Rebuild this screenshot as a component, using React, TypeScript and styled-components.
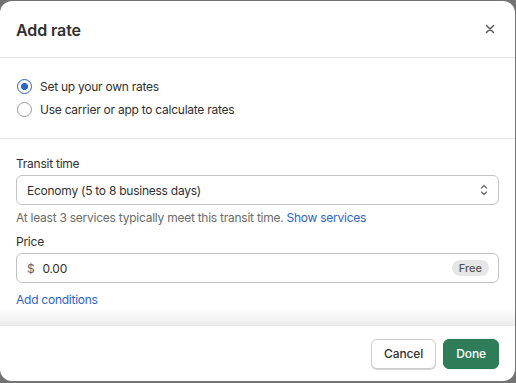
import React from "react";
import styled, { createGlobalStyle } from "styled-components";

const Global = createGlobalStyle`
  html, body { margin: 0; padding: 0; }
  body {
    background: #737373;
    font-family: Inter, "Noto Sans", "Liberation Sans", sans-serif;
    color: #303030;
    -webkit-font-smoothing: antialiased;
  }
  * { box-sizing: border-box; }
`;

const Modal = styled.div`
  margin-top: 1px;
  width: 515px;
  height: 380px;
  background: #fff;
  border-radius: 12px;
  display: flex;
  flex-direction: column;
  overflow: hidden;
  font-size: 12px;
  letter-spacing: -0.25px;
`;

const Header = styled.div`
  height: 57px;
  flex: none;
  display: flex;
  align-items: center;
  justify-content: space-between;
  padding: 0 16px;
  border-bottom: 1px solid #e3e3e3;
`;

const Title = styled.h1`
  margin: 0;
  font-size: 16px;
  font-weight: 600;
  letter-spacing: -0.1px;
  color: #303030;
  padding-top: 1px;
`;

const Close = styled.button`
  border: 0;
  background: none;
  padding: 0;
  width: 20px;
  height: 20px;
  display: flex;
  align-items: center;
  justify-content: center;
  margin-right: -1px;
`;

const Section = styled.div<{ $fade?: boolean }>`
  padding: ${(p) => (p.$fade ? "17px 16px 0" : "20px 16px 21px")};
  display: flex;
  flex-direction: column;
  ${(p) =>
    p.$fade
      ? `flex: 1; background: linear-gradient(to bottom, #fff calc(100% - 18px), #f6f6f6 calc(100% - 8px), #ebebeb);`
      : `border-bottom: 1px solid #e3e3e3; gap: 7px;`}
`;

const RadioRow = styled.label`
  display: flex;
  align-items: center;
  gap: 8px;
  height: 16px;
  color: #303030;
`;

const RadioDot = styled.span<{ $on?: boolean }>`
  width: 15px;
  height: 15px;
  border-radius: 50%;
  flex: none;
  margin-left: 1px;
  border: ${(p) => (p.$on ? "1.5px solid #2c64c8" : "1.3px solid #9a9a9a")};
  background: ${(p) =>
    p.$on ? "radial-gradient(circle, #2c64c8 0 3.3px, #fff 3.8px)" : "#fff"};
`;

const Label = styled.div`
  color: #303030;
  line-height: 16px;
  margin-bottom: 3px;
`;

const Field = styled.div`
  height: 30px;
  border: 1px solid #c4c4c4;
  border-radius: 6px;
  display: flex;
  align-items: center;
  padding: 0 9px 0 10px;
  color: #303030;
`;

const FieldText = styled.span`
  flex: 1;
`;

const Prefix = styled.span`
  color: #616161;
  margin-right: 8px;
`;

const Help = styled.div`
  color: #6b6b6b;
  line-height: 16px;
  margin: 5px 0 8px;
`;

const Link = styled.a`
  color: #2c64c8;
  text-decoration: none;
`;

const Badge = styled.span`
  background: #e6e6e6;
  color: #555;
  font-size: 11px;
  font-weight: 500;
  letter-spacing: 0;
  border-radius: 8px;
  padding: 2px 7px;
  line-height: 12px;
`;

const Conditions = styled.div`
  margin-top: 9px;
  line-height: 16px;
`;

const Footer = styled.div`
  height: 56px;
  flex: none;
  border-top: 1px solid #e8e8e8;
  display: flex;
  align-items: center;
  justify-content: flex-end;
  gap: 7px;
  padding: 0 16px 0 0;
`;

const Button = styled.button<{ $primary?: boolean }>`
  height: 30px;
  border-radius: 6px;
  font-family: inherit;
  font-size: 12px;
  letter-spacing: -0.1px;
  font-weight: 500;
  padding: 0 12px;
  border: ${(p) => (p.$primary ? "1px solid #2a7a55" : "1px solid #cccccc")};
  background: ${(p) => (p.$primary ? "#2e7d58" : "#fff")};
  color: ${(p) => (p.$primary ? "#fff" : "#303030")};
  box-shadow: ${(p) => (p.$primary ? "none" : "0 1px 0 #d6d6d6")};
`;

export default function App() {
  return (
    <>
      <Global />
      <Modal>
        <Header>
          <Title>Add rate</Title>
          <Close aria-label="Close">
            <svg width="10" height="10" viewBox="0 0 10 10">
              <path d="M1.5 1.5 L8.5 8.5 M8.5 1.5 L1.5 8.5" stroke="#5a5a5a" strokeWidth="1.5" strokeLinecap="round" />
            </svg>
          </Close>
        </Header>
        <Section>
          <RadioRow>
            <RadioDot $on />
            Set up your own rates
          </RadioRow>
          <RadioRow>
            <RadioDot />
            Use carrier or app to calculate rates
          </RadioRow>
        </Section>
        <Section $fade>
          <Label>Transit time</Label>
          <Field>
            <FieldText>Economy (5 to 8 business days)</FieldText>
            <svg width="10" height="14" viewBox="0 0 10 14">
              <path d="M2.5 5 L5 2.5 L7.5 5 M2.5 9 L5 11.5 L7.5 9" fill="none" stroke="#666" strokeWidth="1.2" strokeLinecap="round" strokeLinejoin="round" />
            </svg>
          </Field>
          <Help>
            At least 3 services typically meet this transit time. <Link href="#">Show services</Link>
          </Help>
          <Label>Price</Label>
          <Field>
            <Prefix>$</Prefix>
            <FieldText>0.00</FieldText>
            <Badge>Free</Badge>
          </Field>
          <Conditions>
            <Link href="#">Add conditions</Link>
          </Conditions>
        </Section>
        <Footer>
          <Button>Cancel</Button>
          <Button $primary>Done</Button>
        </Footer>
      </Modal>
    </>
  );
}
